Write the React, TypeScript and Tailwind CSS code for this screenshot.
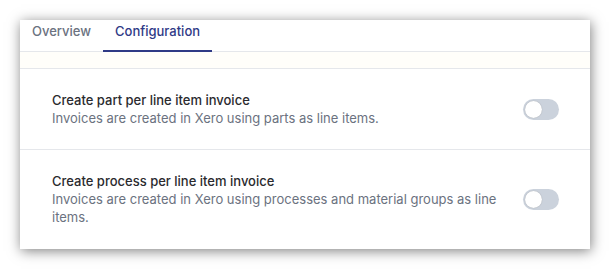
const settings = [
  {
    id: "part",
    title: "Create part per line item invoice",
    description: "Invoices are created in Xero using parts as line items.",
  },
  {
    id: "process",
    title: "Create process per line item invoice",
    description: "Invoices are created in Xero using processes and material groups as line items.",
  },
];

function Toggle() {
  return (
    <button
      type="button"
      role="switch"
      aria-checked="false"
      className="relative flex h-[21px] w-9 shrink-0 items-center rounded-full bg-[#cbd2dc] px-[2px]"
    >
      <span className="h-[17px] w-[17px] rounded-full bg-white shadow-[0_0_1px_rgba(0,0,0,0.3)]" />
    </button>
  );
}

export default function App() {
  return (
    <div className="h-[270px] w-[610px] bg-white p-5 font-['Inter',sans-serif]">
      <div className="flex w-[570px] flex-col bg-white shadow-[1px_2px_12px_rgba(0,0,0,0.5)]">
        <div className="flex border-b border-[#e5e7eb] text-[13px] font-medium leading-[18px]">
          <div className="px-3 pb-[11px] pt-[2px] text-[#6b7280]">Overview</div>
          <div className="-mb-px border-b-2 border-[#2f3a86] px-3 pb-[10px] pt-[2px] text-[#2f3a86]">
            Configuration
          </div>
        </div>
        <div className="h-[17px] border-b border-[#e5e7eb] bg-[#fffefa]" />
        {settings.map((s, i) => (
          <div
            key={s.id}
            className={
              "flex items-center gap-6 py-[22px] pl-8 pr-[31px] " + (i > 0 ? "border-t border-[#e5e7eb] pb-[23px]" : "")
            }
          >
            <div className="flex-1 text-[13px] leading-[18px]">
              <div className="font-medium text-[#2a2a2e]">{s.title}</div>
              <div className="text-[#6b7280]">{s.description}</div>
            </div>
            <Toggle />
          </div>
        ))}
      </div>
    </div>
  );
}
